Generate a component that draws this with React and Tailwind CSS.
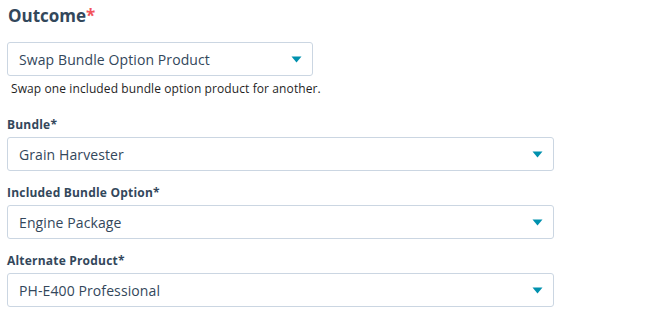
const font = { fontFamily: '"Open Sans", "Liberation Sans", sans-serif' };

function Caret() {
  return (
    <svg width="11" height="7" viewBox="0 0 11 7" className="shrink-0">
      <path d="M0.5 0.5 L10.5 0.5 L5.5 6.5 Z" fill="#0091ae" />
    </svg>
  );
}

function SelectBox({ value, width }) {
  return (
    <div
      className={`flex items-center justify-between h-[34px] border border-[#cbd6e2] rounded-[3px] bg-white pl-[11px] pr-[10px] ${width}`}
    >
      <span className="text-[14px] text-[#33475b] tracking-[0.1px]">{value}</span>
      <Caret />
    </div>
  );
}

function Field({ label, value }) {
  return (
    <div className="flex flex-col">
      <div className="text-[12px] font-bold text-[#33475b] leading-[15px] mb-[5px] tracking-[0.2px]">
        {label}*
      </div>
      <SelectBox value={value} width="w-[547px]" />
    </div>
  );
}

export default function App() {
  return (
    <div className="w-[650px] h-[325px] bg-white pl-[7px] pt-[5px]" style={font}>
      <h2 className="text-[17px] font-bold text-[#33475b] leading-[22px] pl-[1px]">
        Outcome<span className="text-[#f2545b]">*</span>
      </h2>
      <div className="mt-[15px]">
        <SelectBox value="Swap Bundle Option Product" width="w-[306px]" />
      </div>
      <p className="text-[12px] text-[#1f1f1f] mt-[5px] pl-[4px] leading-[16px] tracking-[0.1px]">
        Swap one included bundle option product for another.
      </p>
      <div className="flex flex-col gap-[14px] mt-[20px]">
        <Field label="Bundle" value="Grain Harvester" />
        <Field label="Included Bundle Option" value="Engine Package" />
        <Field label="Alternate Product" value="PH-E400 Professional" />
      </div>
    </div>
  );
}
